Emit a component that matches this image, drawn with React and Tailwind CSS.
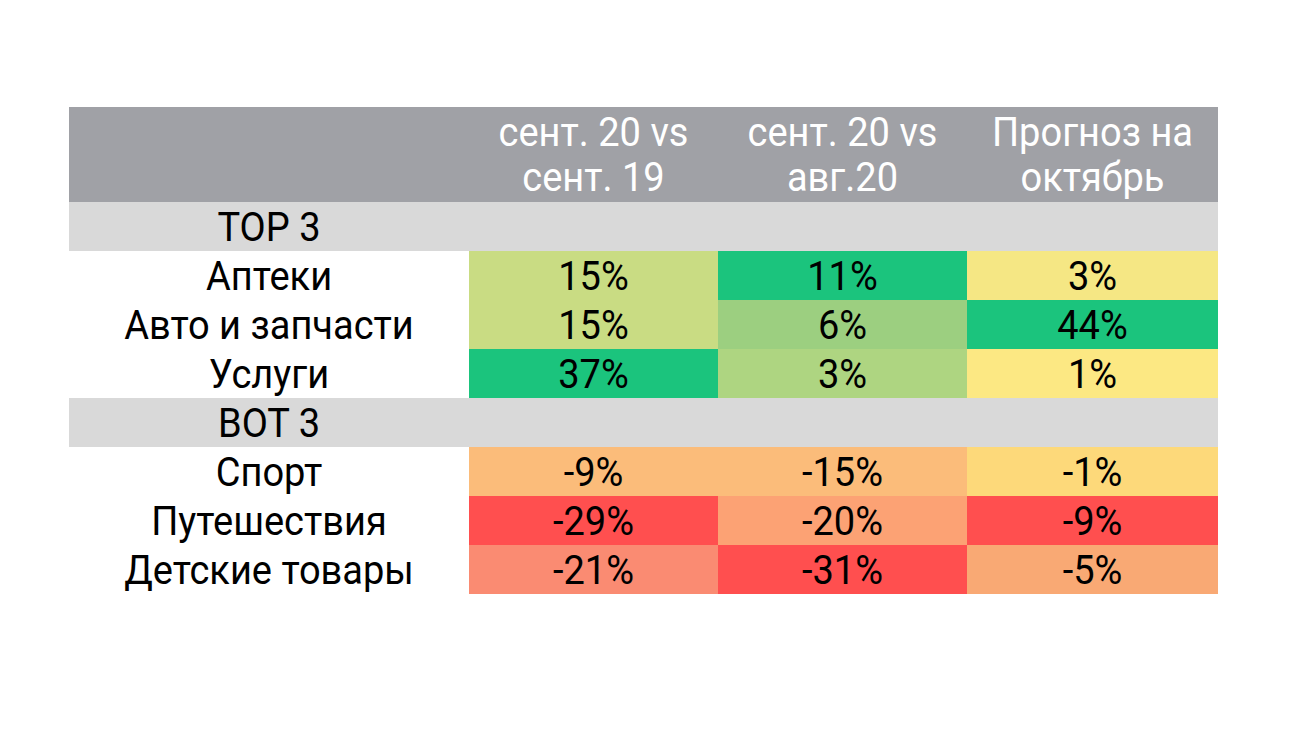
import React from "react";

const rows = [
  { type: "section", label: "TOP 3" },
  { label: "Аптеки", cells: [["15%", "bg-[#c9dc83]"], ["11%", "bg-[#1bc47d]"], ["3%", "bg-[#f5e784]"]] },
  { label: "Авто и запчасти", cells: [["15%", "bg-[#c9dc83]"], ["6%", "bg-[#9ccf80]"], ["44%", "bg-[#1bc47d]"]] },
  { label: "Услуги", cells: [["37%", "bg-[#1bc47d]"], ["3%", "bg-[#aed581]"], ["1%", "bg-[#fce883]"]] },
  { type: "section", label: "BOT 3" },
  { label: "Спорт", cells: [["-9%", "bg-[#fbbc7a]"], ["-15%", "bg-[#fbbc7a]"], ["-1%", "bg-[#fdd97a]"]] },
  { label: "Путешествия", cells: [["-29%", "bg-[#ff4f4f]"], ["-20%", "bg-[#fca274]"], ["-9%", "bg-[#ff4f4f]"]] },
  { label: "Детские товары", cells: [["-21%", "bg-[#fa8b72]"], ["-31%", "bg-[#ff4f4f]"], ["-5%", "bg-[#f9a974]"]] },
];

const headers = [
  ["сент. 20 vs", "сент. 19"],
  ["сент. 20 vs", "авг.20"],
  ["Прогноз на", "октябрь"],
];

// text in the picture is a bit taller than plain Roboto
const T = ({ children }) => <span className="inline-block scale-y-[1.07]">{children}</span>;

const App = () => {
  return (
    <div className="w-[1300px] h-[731px] bg-white pt-[107px] pl-[69px] font-['Roboto',sans-serif] text-[38px] text-black">
      <div className="grid grid-cols-[400px_249px_249px_251px] w-[1149px]">
        <div className="h-[95px] bg-[#a0a1a6]" />
        {headers.map((h, i) => (
          <div
            key={i}
            className="h-[95px] bg-[#a0a1a6] text-white flex flex-col items-center justify-center leading-[45px]"
          >
            <T>{h[0]}</T>
            <T>{h[1]}</T>
          </div>
        ))}

        {rows.map((r, i) =>
          r.type === "section" ? (
            <div
              key={i}
              className="col-span-4 grid grid-cols-[400px_749px] h-[49px] bg-[#d9d9d9]"
            >
              <div className="flex items-center justify-center leading-none"><T>{r.label}</T></div>
              <div />
            </div>
          ) : (
            <React.Fragment key={i}>
              <div className="h-[49px] flex items-center justify-center leading-none"><T>{r.label}</T></div>
              {r.cells.map(([v, bg], j) => (
                <div key={j} className={`h-[49px] flex items-center justify-center leading-none ${bg}`}>
                  <T>{v}</T>
                </div>
              ))}
            </React.Fragment>
          )
        )}
      </div>
    </div>
  );
};

export default App;
